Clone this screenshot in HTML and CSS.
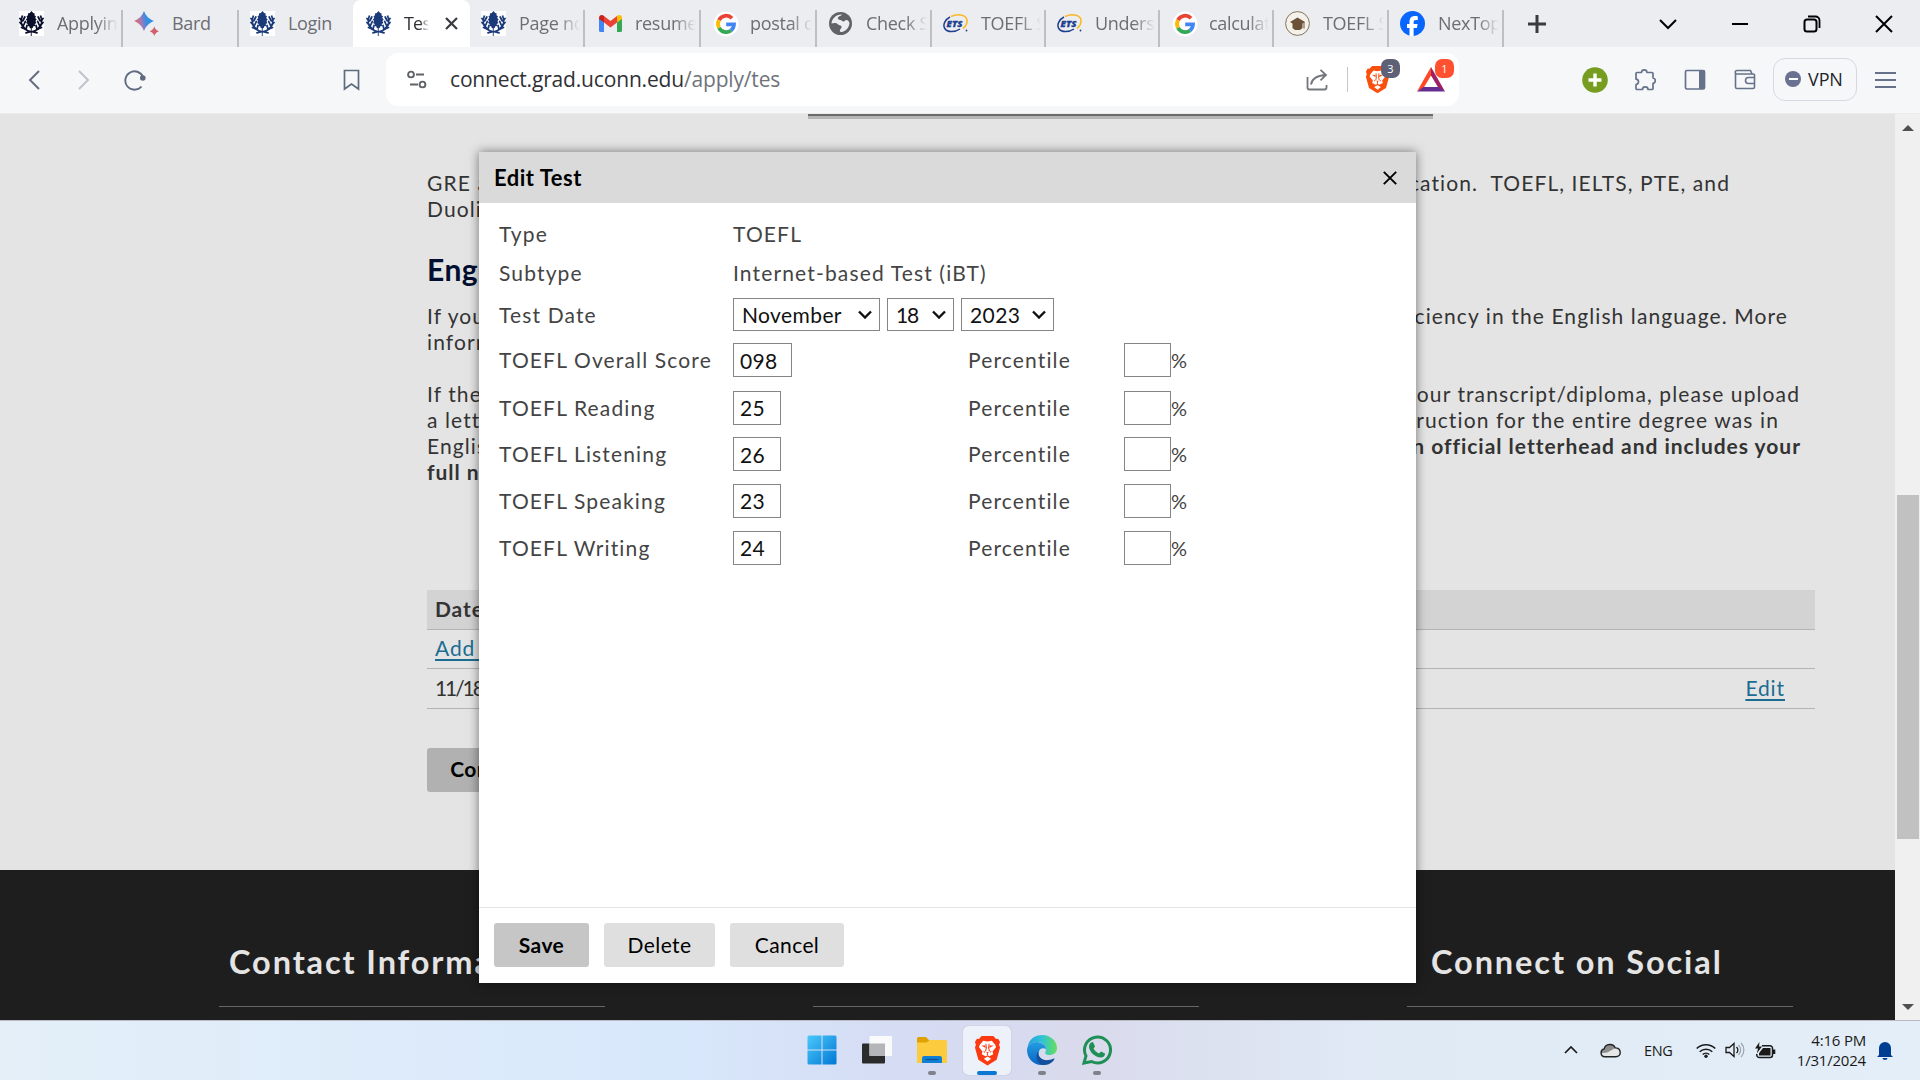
FILE: index.html
```
<!DOCTYPE html>
<html lang="en">
<head>
<meta charset="utf-8">
<title>Test Scores</title>
<link rel="stylesheet" href="styles.css">
</head>
<body>
<svg class="defs" width="0" height="0" aria-hidden="true">
  <defs>
    <symbol id="oak" viewBox="0 0 25 25">
      <rect width="25" height="25" fill="#fff"/>
      <path fill="currentColor" d="M12.500 0l1.700 2 1.500.5-.3 1.800 1.600 1-.8 1.700 1.500 1.500-1.300 1.500 1 1.900-1.700 1 .4 2-1.800.4-.6 1.700-1 .3V25h-.9v-7.700l-1-.3-.6-1.700-1.800-.4.4-2-1.700-1 1-1.900-1.300-1.500 1.500-1.500-.8-1.700 1.600-1-.3-1.800L10.800 2z"/>
      <path fill="none" stroke="currentColor" stroke-width="1.800" d="M3.500 4.500C1.500 9 2 14.500 6 17.800c2 2 4.500 2.700 6.500 3M21.500 4.500c2 4.500 1.500 10-2.500 13.300-2 2-4.500 2.700-6.500 3"/>
      <path fill="none" stroke="currentColor" stroke-width="1.800" stroke-linecap="round" d="M1 7.500l2 2.500M1 11.500l2.500 3M2.500 16.500l4 1.800M5.800 6L4 9.500M6.300 10.500L4.700 14M8 14.500L7 18M24 7.500l-2 2.500M24 11.500l-2.500 3M22.500 16.500l-4 1.800M19.200 6L21 9.500M18.700 10.500l1.600 3.500M17 14.500l1 3.500M7 21.800l3.500-1M18 21.800l-3.500-1"/>
    </symbol>
    <symbol id="google" viewBox="0 0 30 30">
      <circle cx="15" cy="15" r="12.500" fill="#fff"/>
      <g fill="none" stroke-width="3.800">
        <path stroke="#ea4335" d="M21 9.200A8 8 0 0 0 8 11.200"/>
        <path stroke="#fbbc05" d="M8 11.200a8 8 0 0 0 0 7.600"/>
        <path stroke="#34a853" d="M8 18.800a8 8 0 0 0 12 2.600"/>
        <path stroke="#4285f4" d="M20 21.400A8 8 0 0 0 23 15.300H15.200"/>
      </g>
    </symbol>
    <symbol id="ets" viewBox="0 0 25 25">
      <path fill="none" stroke="#fdb827" stroke-width="1.600" d="M8 5.500C15 2 25 4 24 11c-.3 3-2 5-4 6.500"/>
      <path fill="none" stroke="#1d3f8f" stroke-width="1.500" d="M7 6C2 8.500-.5 14 1.800 17.500c2.500 4 10 4 15.200.5"/>
      <text x="3.600" y="16" font-family="Open Sans, sans-serif" font-size="9.500" font-weight="800" font-style="italic" fill="#1d3f8f" stroke="#1d3f8f" stroke-width=".3">ETS</text>
      <circle cx="23.500" cy="19.500" r=".9" fill="#1d3f8f"/>
    </symbol>
    <symbol id="lion" viewBox="0 0 28 32">
      <path d="M8 1h12l3 3 2-.2 2 3.400-1 2.800 1 3-3.500 12.500L14 31.500 4.500 25.500 1 13l1-3-1-2.800L3 3.800 5 4z"/>
      <path fill="#fff" d="M9.500 5.800l4.500.9 4.500-.9L22 10l.8 2.500-3.600 4.500.8 2.800-4 2.200L14 20.800 12 22l-4-2.200.8-2.800-3.600-4.500L6 10z"/>
      <path fill="#fff" d="M14 22.300l3.800 2.200L14 27.500l-3.800-3z"/>
      <path d="M7.500 10.700l4.300.2.300 2.600zM20.500 10.700l-4.300.2-.3 2.600zM12.700 17.500h2.600L14 19.500zM9.500 16l2 1.300-.5 1.200zM18.500 16l-2 1.300.5 1.200z"/>
      <path fill="none" stroke="currentColor" stroke-width="1.100" d="M12.300 9l.5 4-.8 4M15.700 9l-.5 4 .8 4M14 19v2"/>
    </symbol>
    <symbol id="chev" viewBox="0 0 14 9"><path d="M1 1.500l6 6 6-6" fill="none" stroke="#111" stroke-width="2.400"/></symbol>
  </defs>
</svg>

<header class="tabstrip">
  <nav class="tabs">
    <div class="tab first"><svg class="fav oak-dark"><use href="#oak"/></svg><span>Applying</span></div>
    <div class="tab"><svg class="fav" viewBox="0 0 25 25"><defs><linearGradient id="bard" x1="0" y1=".6" x2="1" y2=".4"><stop offset="0" stop-color="#f0694a"/><stop offset=".35" stop-color="#a678b8"/><stop offset=".6" stop-color="#3b8de0"/><stop offset="1" stop-color="#2b96e0"/></linearGradient></defs><path fill="url(#bard)" d="M10 0c2 5 5 8 10 10-5 2-8 5-10 10C8 15 5 12 0 10 5 8 8 5 10 0z"/><path fill="#d0606c" d="M20.300 15.500c.9 2.500 2.200 3.800 4.700 4.700-2.500.9-3.800 2.200-4.700 4.700-.9-2.500-2.200-3.800-4.700-4.700 2.500-.9 3.800-2.200 4.700-4.700z"/></svg><span>Bard</span></div>
    <div class="tab plain"><svg class="fav oak-blue"><use href="#oak"/></svg><span>Login</span></div>
    <div class="tab active"><svg class="fav oak-blue"><use href="#oak"/></svg><span>Test</span><svg class="tab-x" viewBox="0 0 13 13"><path d="M1 1l11 11M12 1L1 12" stroke="#3a3b40" stroke-width="2.200"/></svg></div>
    <div class="tab"><svg class="fav oak-blue"><use href="#oak"/></svg><span>Page not</span></div>
    <div class="tab wide"><svg class="fav" viewBox="0 0 25 25"><path fill="#4285f4" d="M1 7l5 3.500V21H2.500A1.500 1.500 0 0 1 1 19.500z"/><path fill="#34a853" d="M24 7l-5 3.500V21h3.500a1.500 1.500 0 0 0 1.500-1.500z"/><path fill="#ea4335" d="M6 5l6.500 5L19 5v6.500l-6.500 5-6.500-5z"/><path fill="#c5221f" d="M1 7c0-3 3-4 5-2v6.500L1 8z"/><path fill="#fbbc04" d="M24 7c0-3-3-4-5-2v6.500L24 8z"/></svg><span>resume</span></div>
    <div class="tab google"><svg class="fav big"><use href="#google"/></svg><span>postal code</span></div>
    <div class="tab"><svg class="fav" viewBox="0 0 25 25"><circle cx="12.500" cy="12.500" r="11.500" fill="#5f6368"/><path fill="#ecedf1" d="M14 3.500c-1 1.500-3 1.500-4 3-.8 1.300 1 2.500 2.500 2.500 1 0 1.500 1.500 3 1.500 1.400 0 1.500-2 3.500-1.500 1 .3 2 1.500 2.500 3-.5 5-4 8.500-8 9-1 0-2-.5-1.500-2 .5-1.600 2-2 1.500-3.500-.6-1.600-3-1.200-4-2.500C8.500 11.500 5 12 3.500 12.500 4 7.500 8.500 3 14 3.500z"/></svg><span>Check S</span></div>
    <div class="tab"><svg class="fav"><use href="#ets"/></svg><span>TOEFL S</span></div>
    <div class="tab"><svg class="fav"><use href="#ets"/></svg><span>Underst</span></div>
    <div class="tab google"><svg class="fav big"><use href="#google"/></svg><span>calculat</span></div>
    <div class="tab"><svg class="fav" viewBox="0 0 25 25"><circle cx="12.500" cy="12.500" r="11.900" fill="#f4f1ea" stroke="#86735d" stroke-width="1"/><path fill="#6b5138" d="M12.500 6.500L5 11l2.500 1.600v4.400l2.500 2h5l2.500-2v-4.400L20 11z"/><path d="M19 11v6.500" stroke="#6b5138"/></svg><span>TOEFL S</span></div>
    <div class="tab"><svg class="fav" viewBox="0 0 25 25"><circle cx="12.500" cy="12.500" r="12.500" fill="#0866ff"/><path fill="#fff" d="M9.500 25v-8H7v-4h2.500v-2C9.500 7 11.500 5 15 5c1 0 2 .1 2.800.4V9h-1.700c-1.900 0-2.500.8-2.500 2.400V13h4l-.7 4h-3.300v8z"/></svg><span>NexTop</span></div>
  </nav>
  <svg class="newtab" viewBox="0 0 20 20"><path d="M10 1v18M1 10h18" stroke="#3a3b40" stroke-width="3"/></svg>
  <div class="winctl">
    <svg viewBox="0 0 18 18"><path d="M1 5l8 8 8-8" fill="none" stroke="#000" stroke-width="2"/></svg>
    <svg viewBox="0 0 18 18"><path d="M1 9h16" stroke="#000" stroke-width="2"/></svg>
    <svg viewBox="0 0 18 18"><rect x="1.500" y="4.500" width="12" height="12" rx="2.500" fill="none" stroke="#000" stroke-width="2"/><path d="M5 1.500h7.500a4 4 0 0 1 4 4V13" fill="none" stroke="#000" stroke-width="1.800"/></svg>
    <svg viewBox="0 0 18 18"><path d="M1 1l16 16M17 1L1 17" stroke="#000" stroke-width="2"/></svg>
  </div>
</header>

<div class="toolbar">
  <div class="navs">
    <svg width="12" height="20" viewBox="0 0 12 20"><path d="M11 1L2 10l9 9" fill="none" stroke="#5f6b7e" stroke-width="1.900"/></svg>
    <svg width="12" height="20" viewBox="0 0 12 20"><path d="M1 1l9 9-9 9" fill="none" stroke="#bcc1ca" stroke-width="1.900"/></svg>
    <svg width="23" height="22" viewBox="0 0 23 22"><path d="M17.500 17.500A9.200 9.200 0 1 1 19 8" fill="none" stroke="#5f6b7e" stroke-width="1.900"/><circle cx="18.800" cy="9" r="2.800" fill="#5f6b7e"/></svg>
  </div>
  <svg class="bookmark" viewBox="0 0 17 22"><path d="M1.500 1.500h14v18.500l-7-5-7 5z" fill="none" stroke="#5f6b7e" stroke-width="1.700"/></svg>
  <div class="omnibox">
    <svg class="tune" viewBox="0 0 20 19"><g fill="none" stroke="#5f6368" stroke-width="1.900"><circle cx="4" cy="4.500" r="2.900"/><path d="M9 4.500h8M3 14.500h8"/><circle cx="15.500" cy="14.500" r="2.900"/></g></svg>
    <div class="url">connect.grad.uconn.edu<span>/apply/tes</span></div>
    <svg class="share" viewBox="0 0 22 22"><path d="M1.500 8v10.500a2 2 0 0 0 2 2h15a2 2 0 0 0 2-2V16M5 15.500C6 9 11 6.500 20 6M14.500.8L20 6l-5.500 5.300" fill="none" stroke="#73767c" stroke-width="1.800"/></svg>
    <i class="vsep"></i>
    <div class="shield"><svg viewBox="0 0 28 32"><use href="#lion"/></svg><b>3</b></div>
    <div class="bat"><svg viewBox="0 0 28 25"><path fill="#ff4724" d="M14 0v8.500L6.500 21 0 24.500z"/><path fill="#9e1f63" d="M14 0l14 24.500L21.500 21 14 8.500z"/><path fill="#662d91" d="M0 24.500L6.500 20h15l6.500 4.500z"/></svg><b>1</b></div>
  </div>
  <div class="exts">
    <svg class="plus" viewBox="0 0 26 26"><circle cx="13" cy="13" r="12.800" fill="#769d20"/><path d="M13 6.500v13M6.500 13h13" stroke="#fff" stroke-width="3.400"/></svg>
    <svg class="e-puz" viewBox="0 0 22 22"><path d="M3 3.500h4.500c.3-3.500 5.200-3.500 5.500 0H18a1 1 0 0 1 1 1V9c3 .3 3 5 0 5.300v5.200a1 1 0 0 1-1 1h-4c0-3.500-5.500-3.500-5.500 0H3a1 1 0 0 1-1-1v-4c3.300-.3 3.300-5 0-5.300V4.500a1 1 0 0 1 1-1z" fill="none" stroke="#66728a" stroke-width="1.700" stroke-linejoin="round"/></svg>
    <svg class="e-side" viewBox="0 0 22 22"><rect x="1.500" y="1.500" width="19" height="18.500" rx="1.500" fill="none" stroke="#66728a" stroke-width="1.700"/><path d="M15 1.500h6V20h-6z" fill="#66728a"/></svg>
    <svg class="e-wal" viewBox="0 0 22 22"><path d="M1.500 3.500V18a1.500 1.500 0 0 0 1.500 1.500h16a1.500 1.500 0 0 0 1.500-1.500V7A1.500 1.500 0 0 0 19 5H3A1.500 1.500 0 0 1 3 1.500h13.500L18 5M20.500 8.500h-6a3 3 0 0 0 0 6h6" fill="none" stroke="#66728a" stroke-width="1.600"/></svg>
    <div class="vpn"><i></i>VPN</div>
    <svg class="e-menu" viewBox="0 0 22 18"><path d="M0 2h21M0 9h21M0 16h21" stroke="#66728a" stroke-width="1.800"/></svg>
  </div>
</div>

<div class="viewport">
  <div class="page">
    <div class="topline"></div>
    <main class="content">
      <section class="copy">
        <p class="l1"><span>GRE and</span><span class="r">cation.&nbsp; TOEFL, IELTS, PTE, and</span></p>
        <p><span>Duolingo</span></p>
        <h2>English</h2>
        <p class="l2"><span>If your</span><span class="r">ciency in the English language. More</span></p>
        <p><span>information</span></p>
        <p class="l3 gap"><span>If the</span><span class="r">our transcript/diploma, please upload</span></p>
        <p class="l4"><span>a letter</span><span class="r">ruction for the entire degree was in</span></p>
        <p class="l5"><span>English</span><strong class="r">n official letterhead and includes your</strong></p>
        <p><strong>full name</strong></p>
      </section>
      <div class="scores">
        <div class="row head"><span>Date</span></div>
        <div class="row"><a>Add Test</a></div>
        <div class="row"><span class="date">11/18</span><a>Edit</a></div>
      </div>
      <button class="continue">Continue</button>
    </main>
    <footer class="foot">
      <section><h3>Contact Information</h3></section>
      <section></section>
      <section class="social"><h3>Connect on Social</h3></section>
    </footer>
  </div>
  <aside class="scrollbar">
    <svg viewBox="0 0 12 6"><path d="M0 6l6-6 6 6z" fill="#505050"/></svg>
    <i></i>
    <svg viewBox="0 0 12 6"><path d="M0 0l6 6 6-6z" fill="#505050"/></svg>
  </aside>

  <div class="dialog">
    <div class="d-head"><span>Edit Test</span><svg viewBox="0 0 14 14"><path d="M.8.8l12.400 12.400M13.200.8L.8 13.200" stroke="#000" stroke-width="1.900"/></svg></div>
    <div class="d-body">
      <label>Type</label><div class="val">TOEFL</div>
      <label>Subtype</label><div class="val">Internet-based Test (iBT)</div>
      <label>Test Date</label>
      <div class="selects">
        <div class="sel month">November<svg><use href="#chev"/></svg></div>
        <div class="sel day">18<svg><use href="#chev"/></svg></div>
        <div class="sel year">2023<svg><use href="#chev"/></svg></div>
      </div>
      <label>TOEFL Overall Score</label><input class="w3" value="098"><label>Percentile</label><div class="pct"><input>%</div>
      <label>TOEFL Reading</label><input value="25"><label>Percentile</label><div class="pct"><input>%</div>
      <label>TOEFL Listening</label><input value="26"><label>Percentile</label><div class="pct"><input>%</div>
      <label>TOEFL Speaking</label><input value="23"><label>Percentile</label><div class="pct"><input>%</div>
      <label>TOEFL Writing</label><input value="24"><label>Percentile</label><div class="pct"><input>%</div>
    </div>
    <div class="d-foot"><button class="save">Save</button><button class="delete">Delete</button><button class="cancel">Cancel</button></div>
  </div>
</div>

<div class="taskbar">
  <div class="apps">
    <div class="app"><svg viewBox="0 0 30 30"><defs><linearGradient id="win" x1="0" y1="0" x2="1" y2="1"><stop offset="0" stop-color="#4cc8fb"/><stop offset="1" stop-color="#0078d4"/></linearGradient></defs><path fill="url(#win)" d="M.5 2a1.500 1.500 0 0 1 1.500-1.500H14.500v14H.5zM15.500.5H28a1.500 1.500 0 0 1 1.500 1.500v12.500h-14zM.5 15.500h14v14H2A1.500 1.500 0 0 1 .5 28zM15.500 15.500h14V28a1.500 1.500 0 0 1-1.500 1.500H15.500z"/></svg></div>
    <div class="app"><svg viewBox="0 0 30 30"><rect y="8.500" width="23" height="20" rx="1" fill="#2b2b2b"/><rect x="7.500" y="1" width="22.500" height="20" rx="1" fill="#fafafa"/><path fill="#b4b5b8" d="M7.500 8.500H23V21H7.500z"/></svg></div>
    <div class="app run"><svg viewBox="0 0 30 30"><path fill="#e0a106" d="M0 3.500A1.500 1.500 0 0 1 1.500 2H9l3.500 3.500V10H0z"/><path fill="#fdcb3e" d="M0 7.500h9.500L13 5h15.500A1.500 1.500 0 0 1 30 6.500V28H0z"/><path fill="#1180d4" d="M5 28v-5a2 2 0 0 1 2-2h16a2 2 0 0 1 2 2v5z"/><path stroke="#0b5394" stroke-width="1.300" d="M8.500 24.500h13"/></svg></div>
    <div class="app run on"><svg class="lion" viewBox="0 0 28 32"><use href="#lion"/></svg></div>
    <div class="app run"><svg viewBox="0 0 30 30"><defs><linearGradient id="e1"><stop offset="0" stop-color="#2a9fe0"/><stop offset=".5" stop-color="#2fc3d4"/><stop offset="1" stop-color="#66e05a"/></linearGradient><linearGradient id="e2" x1="0" y1="0" x2="0" y2="1"><stop offset="0" stop-color="#249de0"/><stop offset="1" stop-color="#0a63c4"/></linearGradient></defs><path fill="url(#e1)" d="M.5 12C2 4 8 0 15 0c9 0 15 6.500 15 13 0 5-4 7-7.500 7-3 0-5-1-4-3C20.500 12 16 7 10 7 6 7 2 9 .5 12z"/><path fill="url(#e2)" d="M0 15C0 10 4.500 7 9.500 7c6 0 9.500 4 9.500 7-7-3-9.500 5-5.500 10 2 3 6 4 6 4-2 1.500-4 2-5 2C6 30 0 23 0 15z"/><path fill="#124f9c" d="M11.500 16c-1.500 6 4.500 10 10 9 3-.5 5.500-2 6-1.500.5 1-4 6.500-10 6.500C9 30 8 20 11.500 16z"/></svg></div>
    <div class="app run"><svg viewBox="0 0 30 30"><path fill="none" stroke="#1f9055" stroke-width="3" d="M2 28l2-7A13 13 0 1 1 9.500 26.500z"/><path fill="#1f9055" d="M9 7.500l2-.5 2 4.500-1.500 2c1.500 2.500 3 3.800 5.500 5l2-2 4 2c0 3-2.500 4-4 4-6 0-12-6-12-11 0-1.700 1-3 2-4z"/></svg></div>
  </div>
  <div class="tray">
    <svg class="t-up" viewBox="0 0 14 8"><path d="M1 7l6-6 6 6" fill="none" stroke="#1a1a1a" stroke-width="1.700"/></svg>
    <svg class="t-cloud" viewBox="0 0 20 14"><path d="M4.500 13a3.800 3.800 0 0 1-.5-7.500C5 0 13 0 14.500 4.500c6 0 6.500 8.500.5 8.500z" fill="#e6e6e6"/><path d="M1 9.500a3.500 3.500 0 0 1 3-4C5 0 13 0 14.500 4.500L7 9z" fill="#8d8d8d"/><path d="M4.500 13a3.800 3.800 0 0 1-.5-7.500C5 0 13 0 14.500 4.500c6 0 6.500 8.500.5 8.500z" fill="none" stroke="#222" stroke-width="1.300"/></svg>
    <span class="lang">ENG</span>
    <svg class="t-wifi" viewBox="0 0 20 15"><g fill="none" stroke="#1a1a1a" stroke-width="1.500"><path d="M.7 5.500a13.200 13.200 0 0 1 18.600 0M3.700 8.700a9 9 0 0 1 12.600 0M6.700 11.500a4.800 4.800 0 0 1 6.600 0"/></g><circle cx="10" cy="13.300" r="1.700" fill="#1a1a1a"/></svg>
    <svg class="t-vol" viewBox="0 0 20 16"><path d="M1 5.500h3.500L9 1.500v13l-4.500-4H1zM11.500 5a4 4 0 0 1 0 6" fill="none" stroke="#1a1a1a" stroke-width="1.300"/><path d="M13.500 3a7 7 0 0 1 0 10M16 1a10 10 0 0 1 0 14" fill="none" stroke="#9aa3ad" stroke-width="1.200"/></svg>
    <svg class="t-bat" viewBox="0 0 21 17"><path d="M7 3.800h8a2.500 2.500 0 0 1 2.500 2.500v6.700A2.500 2.500 0 0 1 15 15.500H4.300A2.500 2.500 0 0 1 1.800 13v-1" fill="none" stroke="#1a1a1a" stroke-width="1.500"/><path d="M8 6h7.500v7.500H4v-2.200zM18 7.500h2.300v4.500H18zM4.500 0L0 6.500h3L1.800 11.500 7 4.500H4z" fill="#1a1a1a"/></svg>
    <div class="clock">4:16 PM<br>1/31/2024</div>
    <svg class="t-bell" viewBox="0 0 16 19"><path fill="#003e92" d="M2 14V7a6 6 0 0 1 12 0v7l2 2H0zM5.500 17h5a2.500 2 0 0 1-5 0z"/></svg>
  </div>
</div>
</body>
</html>
```
FILE: styles.css
```
* { box-sizing: border-box; }
body { margin: 0; width: 1920px; height: 1080px; overflow: hidden; display: flex; flex-direction: column; font-family: "Open Sans", sans-serif; }
svg { display: block; flex: none; }
.defs { position: absolute; }
p, h2, h3 { margin: 0; }

/* tab strip */
.tabstrip { height: 47px; flex: none; display: flex; align-items: center; background: #ecedf1; }
.tabs { display: grid; grid-template-columns: 123px 116px 114px 117px 115px 116px 116px 115px 114px 114px 114px 115px 115px; height: 47px; }
.tab { display: flex; align-items: center; padding: 0 5px 0 11px; gap: 13px; background: linear-gradient(#bfbfbf, #bfbfbf) right bottom / 2px 37px no-repeat; font-size: 18px; color: #6c6e73; min-width: 0; overflow: hidden; }
.tab span { flex: 1; min-width: 0; overflow: hidden; white-space: nowrap; letter-spacing: -.3px; line-height: 30px; padding-bottom: 2px; -webkit-mask-image: linear-gradient(to right, #000 65%, transparent 100%); mask-image: linear-gradient(to right, #000 65%, transparent 100%); }
.tab.first { padding-left: 19px; }
.tab.plain { background: none; }
.tab.plain span, .tab:nth-child(2) span { -webkit-mask-image: none; mask-image: none; }
.tab.wide { padding-left: 13px; gap: 12px; }
.tab.google { padding-left: 10px; gap: 9px; }
.tab.active { background: #fff; border-radius: 8px 8px 0 0; padding: 0 12px 0 13px; color: #303136; }
.tab.active span { flex: 0 0 25px; letter-spacing: -.8px; }
.tab-x { width: 13px; height: 13px; margin-left: 3px; }
.fav { width: 25px; height: 25px; }
.fav.big { width: 30px; height: 30px; }
.oak-dark { color: #0a0f2c; }
.oak-blue { color: #1b3a7a; }
.newtab { width: 20px; height: 20px; margin-left: 23px; }
.winctl { margin-left: auto; margin-right: 27px; display: flex; gap: 54px; }
.winctl svg { width: 18px; height: 18px; }

/* toolbar */
.toolbar { height: 67px; flex: none; display: flex; align-items: center; background: #f6f7f9; border-bottom: 1px solid #ebebeb; padding-bottom: 1px; }
.navs { display: flex; align-items: center; margin-left: 28px; gap: 38px; }
.navs svg:last-child { margin-left: -4px; }
.bookmark { width: 17px; height: 22px; margin-left: 196px; }
.omnibox { width: 1073px; height: 53px; margin-left: 26px; border-radius: 12px; background: #fff; display: flex; align-items: center; padding-left: 21px; }
.tune { width: 20px; height: 19px; }
.url { width: 856px; margin-left: 23px; padding-bottom: 1px; font-size: 21px; letter-spacing: -.17px; color: #303136; white-space: nowrap; }
.url span { color: #70747a; }
.share { width: 22px; height: 22px; }
.vsep { width: 1px; height: 25px; background: #c4c6ca; margin-left: 19px; }
.shield, .bat { position: relative; }
.shield { margin-left: 17px; }
.shield svg { width: 25px; height: 29px; fill: #fb4f0e; color: #fb4f0e; }
.bat { margin-left: 27px; }
.bat svg { width: 28px; height: 25px; }
.shield b, .bat b { position: absolute; left: 16px; top: -6px; width: 19px; height: 19px; border-radius: 7px; background: #5e6175; color: #fff; font-size: 11px; font-weight: 400; line-height: 19px; text-align: center; }
.bat b { left: 18px; top: -8px; background: #ff5130; }
.exts { display: flex; align-items: center; margin-left: 123px; }
.plus { width: 26px; height: 26px; }
.e-puz, .e-side, .e-wal { width: 22px; height: 22px; }
.e-puz { margin-left: 26px; }
.e-side { margin-left: 28px; }
.e-wal { margin-left: 28px; }
.vpn { width: 84px; height: 43px; margin-left: 17px; border: 1.500px solid #d5d8e0; border-radius: 12px; display: flex; align-items: center; gap: 7px; padding: 0 0 1px 11px; font-size: 18px; letter-spacing: -.1px; color: #22242c; }
.vpn i { width: 16px; height: 16px; border-radius: 50%; background: linear-gradient(#fff, #fff) center / 9px 2px no-repeat #6b7190; }
.e-menu { width: 22px; height: 18px; margin-left: 18px; }

/* web page */
.viewport { position: relative; height: 906px; flex: none; display: flex; font-family: Lato, sans-serif; }
.page { width: 1895px; background: #e4e4e4; }
.topline { width: 625px; height: 5px; margin-left: 808px; background: linear-gradient(#6b6b6b 2px, #b5b5b5 2px); }
.content { height: 751px; padding: 51px 80px 0 427px; }
.copy { height: 420px; font-size: 21px; line-height: 26px; letter-spacing: 1.1px; color: #333; }
.copy p { display: flex; justify-content: space-between; white-space: nowrap; height: 26px; }
.copy .gap { margin-top: 26px; }
.copy strong { letter-spacing: .98px; }
.copy h2 { font-size: 30px; line-height: 34px; margin: 30px 0 17px; letter-spacing: .5px; color: #000e2f; }
.l1 { padding-right: 85px; }
.l2 { padding-right: 27px; }
.l3 { padding-right: 15px; }
.l4 { padding-right: 36px; }
.l5 { padding-right: 14px; }
.scores { font-size: 21px; letter-spacing: .9px; color: #333; }
.row { height: 39.500px; display: flex; align-items: center; justify-content: space-between; padding: 0 30px 2px 8px; border-bottom: 1px solid #b4b4b4; }
.row.head { background: #d3d3d3; font-weight: 700; }
.row a { color: #1b6d92; text-decoration: underline; text-decoration-thickness: 2px; text-underline-offset: 3px; }
.date { letter-spacing: -2.100px; }
button { font-family: Lato, sans-serif; border: 0; border-radius: 3px; font-size: 21px; letter-spacing: .4px; color: #000; height: 44px; padding: 0 0 2px; background: #dfdfdf; }
.continue { display: block; width: 135px; margin-top: 39px; background: #b1b1b1; font-weight: 700; letter-spacing: .4px; }
.foot { height: 150px; background: #1e1e1e; color: #e4e4e4; display: flex; gap: 208px; padding-left: 219px; }
.foot section { width: 386px; height: 137px; border-bottom: 1px solid #666; padding: 72px 0 0 10px; }
.foot .social { padding-left: 24px; }
.foot h3 { font-size: 32.500px; line-height: 40px; letter-spacing: 1.900px; white-space: nowrap; }
.scrollbar { width: 25px; background: #f0f0f0; display: flex; flex-direction: column; align-items: center; padding: 11px 0 10px; }
.scrollbar svg { width: 12px; height: 6px; }
.scrollbar i { width: 22px; height: 344px; margin: 364px 0 auto; background: #c1c1c1; }

/* dialog laid over the page */
.dialog { position: absolute; left: 479px; top: 38px; width: 937px; height: 831px; background: #fff; box-shadow: 0 0 10px rgba(0,0,0,.5); display: flex; flex-direction: column; }
.d-head { height: 51px; background: #dadada; display: flex; align-items: center; justify-content: space-between; padding: 0 19px 0 15px; font-size: 22px; letter-spacing: .5px; font-weight: 700; color: #000; }
.d-head svg { width: 14px; height: 14px; }
.d-body { flex: 1; padding: 11px 0 0 20px; display: grid; grid-template-columns: 234px 235px 156px 1fr; grid-template-rows: 39px 39px 44px 47.700px repeat(4, 46.700px); align-items: center; align-content: start; font-size: 21px; letter-spacing: 1.15px; color: #444; }
.d-body input, .pct { margin-top: 1px; }
.val { grid-column: 2 / 5; }
.selects { grid-column: 2 / 5; display: flex; gap: 7px; }
.sel { height: 33px; border: 1px solid #858585; display: flex; align-items: center; justify-content: space-between; padding: 0 7px 0 8px; color: #111; letter-spacing: .4px; }
.sel svg { width: 14px; height: 9px; }
.month { width: 147px; }
.day { width: 67px; letter-spacing: -1.200px; }
.year { width: 93px; }
.d-body input { width: 48px; height: 34px; border: 1px solid #858585; padding: 0 0 0 6px; font: 21px Lato, sans-serif; color: #111; letter-spacing: .3px; margin-bottom: 0; margin-left: 0; margin-right: 0; }
.d-body .w3 { width: 59px; }
.pct { display: flex; align-items: center; letter-spacing: 0; font-size: 20px; }
.d-body .pct input { width: 47px; margin-top: 0; }
.d-foot { height: 76px; border-top: 1px solid #e3e3e3; padding: 15px; display: flex; gap: 15px; }
.save { width: 95px; background: #c6c6c6; font-weight: 700; }
.delete { width: 111px; }
.cancel { width: 114px; }

/* taskbar */
.taskbar { flex: 1; display: flex; align-items: center; justify-content: space-between; border-top: 1px solid #b9bcc4; padding-bottom: 1px; background: linear-gradient(90deg, #e4eff8, #d8e8fb 35%, #d5dcf4 47%, #d9daec 56%, #e0eaf5 72%, #e3eef8); }
.apps { display: flex; gap: 7px; margin-left: 798px; }
.app { position: relative; width: 48px; height: 49px; border-radius: 5px; display: flex; align-items: center; justify-content: center; }
.app svg { width: 30px; height: 30px; }
.app .lion { width: 27px; height: 31px; fill: #fb3a12; color: #fb3a12; }
.app.on { background: #edf1fa; box-shadow: 0 0 1px #999; }
.app.run::after { content: ""; position: absolute; left: 20px; bottom: 0; width: 8px; height: 4px; border-radius: 2px; background: #7f828c; }
.app.on::after { left: 14px; width: 20px; background: #0a78d4; }
.tray { display: flex; align-items: center; margin-right: 27px; color: #1a1a1a; }
.t-up { width: 14px; height: 8px; }
.t-cloud { width: 21px; height: 15px; margin-left: 22px; }
.lang { font-size: 14.500px; width: 29px; margin-left: 23px; letter-spacing: -.3px; }
.t-wifi { width: 20px; height: 15px; margin-left: 23px; }
.t-vol { width: 20px; height: 16px; margin-left: 9px; }
.t-bat { width: 21px; height: 17px; margin-left: 10px; }
.clock { width: 74px; margin-left: 16px; text-align: right; font-size: 15px; line-height: 20px; letter-spacing: -.2px; white-space: nowrap; }
.t-bell { width: 16px; height: 19px; margin-left: 11px; }
```
